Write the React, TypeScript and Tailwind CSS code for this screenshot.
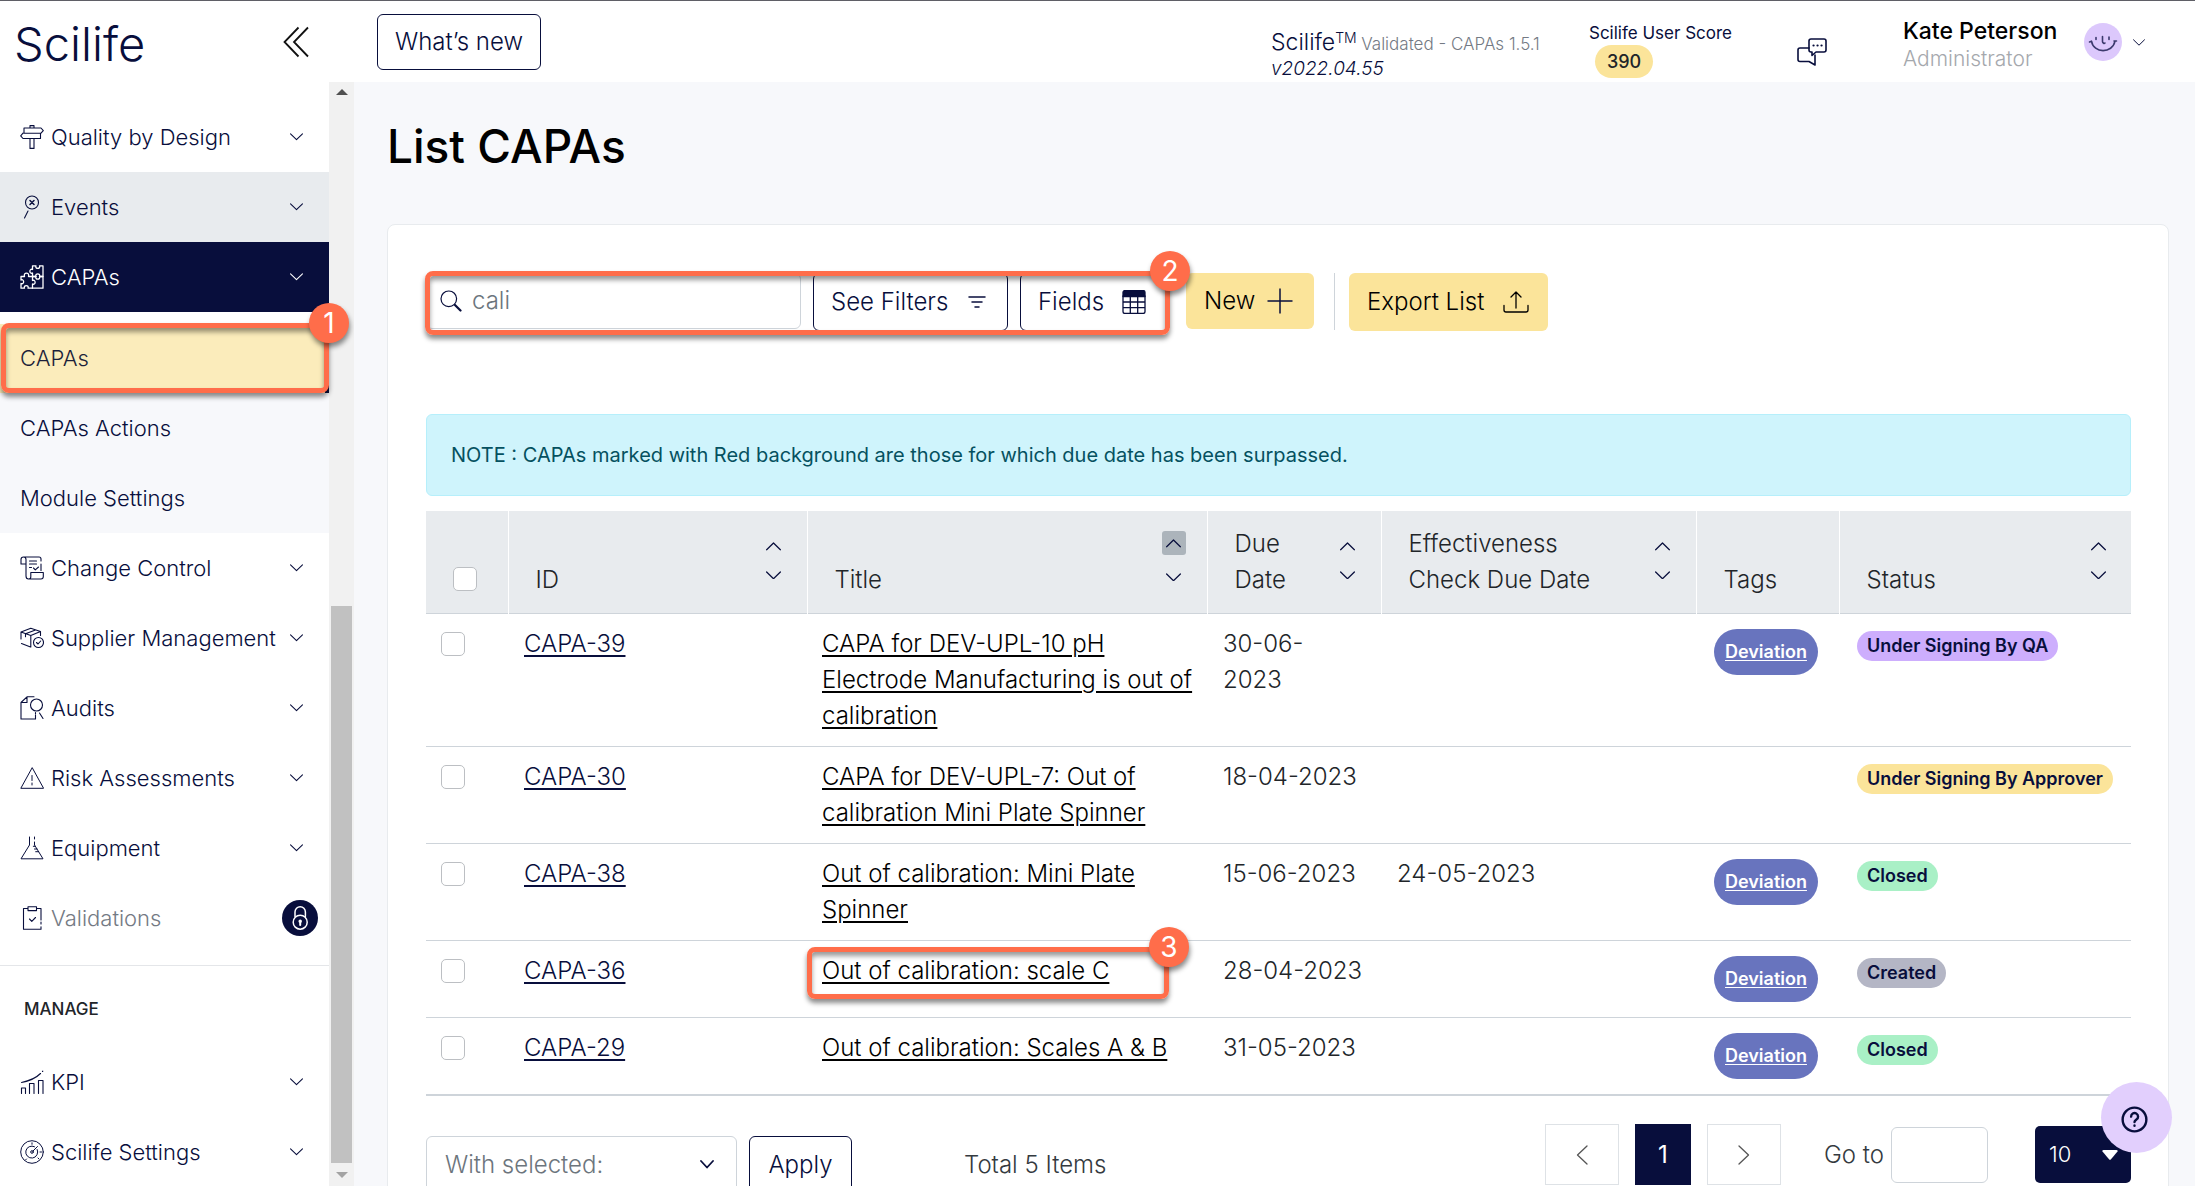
import React, { useState } from "react";
import clsx from "clsx";

type IconProps = { className?: string };

const stroke = {
  fill: "none",
  stroke: "currentColor",
  strokeLinecap: "round" as const,
  strokeLinejoin: "round" as const,
};

const Chevron = ({ className }: IconProps) => (
  <svg viewBox="0 0 12 7" className={className} {...stroke} strokeWidth="1">
    <path d="M.5.8 6 6.2 11.5.8" />
  </svg>
);

const SignpostIcon = () => (
  <svg viewBox="0 0 24 24" className="size-6" {...stroke} strokeWidth="1.1">
    <path d="M10 3V.6h4V3M4 3h17l2.3 2.6L21 8.2H4zM20.500 8.200V13.500H3L.7 10.900 3 8.200M10 13.500v9.900h4v-9.900M14 18v2" />
  </svg>
);

const EventsIcon = () => (
  <svg viewBox="0 0 24 24" className="size-6" {...stroke} strokeWidth="1.1">
    <circle cx="12" cy="7.500" r="6.500" />
    <path d="m10 5.500 4 4M14 5.500l-4 4" strokeWidth="1.5" />
    <path d="m8 16-3.500 7" />
  </svg>
);

const PuzzleIcon = () => (
  <svg viewBox="0 0 24 24" className="size-6" {...stroke} strokeWidth="1.300">
    <path d="M12.500.8H16c-1.500 3.500 5 3.500 3.500 0H23v10.700h-3.500c1.500-3.500-5-3.500-3.500 0h-3.500V8c-3.500 1.500-3.500-5 0-3.500z" />
    <path d="M12.500 11.500H16c-1.500 3.500 5 3.500 3.500 0H23v11.700H12.500V19c3.500 1.500 3.500-5 0-3.500z" />
    <path d="M1 11.500h3.500c-1.500-4.500 5.500-4.500 4 0h4M1 11.500V15c3.500-1.500 3.500 5 0 3.500v4.700h3.500c-1.500-3.500 5-3.500 3.500 0h4.500" />
  </svg>
);

const ScrollIcon = () => (
  <svg viewBox="0 0 24 24" className="size-6" {...stroke} strokeWidth="1.100">
    <path d="M6 8H1V3.500C1 2 1.800 1 3.500 1H19c1.500 0 2 .8 2 2v2M3.500 1C5 1 6 2 6 3.500V20c0 2 .8 3 2.500 3H21c1.500 0 2.300-1 2.300-2.500V16.500H10.800V21c0 1.300-.8 2-2 2M21 8v6.500M9.500 5h7M9.500 8h7M9.500 11.500h2M13.500 12l1.800 1.800L18.500 11" />
  </svg>
);

const BoxIcon = () => (
  <svg viewBox="0 0 24 24" className="size-6" {...stroke} strokeWidth="1.100">
    <path d="M10.500 21 1.500 17.500M1 13V6l9.800-3.800L20.500 5.500v4M1 6l9.800 3.500L20.500 5.500M10.800 9.500V21M5.500 7.700l10-3.700M5.500 7.700v3" />
    <circle cx="18.500" cy="16.500" r="5" />
    <path d="m16.500 16.500 1.500 1.500 2.700-3" />
  </svg>
);

const AuditIcon = () => (
  <svg viewBox="0 0 24 24" className="size-6" {...stroke} strokeWidth="1.100">
    <path d="M14 .8H7L1 6.500V23h14.500v-4M7 .8v5.700H1" />
    <circle cx="16.500" cy="9" r="6" />
    <path d="M15.500 16.500v1.500M19.500 17l3.500 5.500" />
  </svg>
);

const WarningIcon = () => (
  <svg viewBox="0 0 24 24" className="size-6" {...stroke} strokeWidth="1">
    <path d="M12 2 .8 22.300h22.400zM12 9.500v5M12 17v2" />
  </svg>
);

const FlaskIcon = () => (
  <svg viewBox="0 0 24 24" className="size-6" {...stroke} strokeWidth="1">
    <path d="M9.500 1v8L1 22.800h22L14.500 9V6M14.500 1v2M15.300 10.300h-2M17 13h-2.500M18.700 15.700h-3" />
  </svg>
);

const ClipboardIcon = () => (
  <svg viewBox="0 0 24 24" className="size-6" {...stroke} strokeWidth="1.100">
    <path d="M8 2.500H3.500v20.700H21v-2.500M21 18v-2M21 14V2.500h-4.500M8 .8h8.500v3.800H8zM9.500 13l2.300 2.300L15.500 11.500" />
  </svg>
);

const KpiIcon = () => (
  <svg viewBox="0 0 24 24" className="size-6" {...stroke} strokeWidth="1.100">
    <path d="M1.500 23.500v-5.500h4v5.500M9.500 23.500V13.500h4.500v10M18.500 23.500v-13H23v13M1.500 12.500C9 11 16 8 20.500 3.500M22.500 1.500l.3-.3" />
  </svg>
);

const DialIcon = () => (
  <svg viewBox="0 0 24 24" className="size-6" {...stroke} strokeWidth="1">
    <circle cx="12" cy="12" r="11.300" />
    <path d="M17.200 9.500A6 6 0 1 1 14.500 6.700" />
    <circle cx="12" cy="12" r="1.300" />
    <path d="m13 11 4.500-4.500M12 2.800v1.500M20 12h1.500M6.500 19l-.8.8M18 18l.8.8" />
  </svg>
);

const LockIcon = () => (
  <svg viewBox="0 0 36 36" className="size-9" {...stroke} strokeWidth="1.500">
    <circle cx="18" cy="18" r="18" fill="#080e3c" stroke="none" />
    <g stroke="#fff">
      <path d="M13 16.500V12a5.200 5.200 0 0 1 10.400 0v4.500" />
      <circle cx="18.200" cy="22.200" r="7" />
      <path d="M18.200 22.500v2.500" strokeWidth="2" />
      <circle cx="18.200" cy="21.200" r="1" fill="#fff" />
    </g>
  </svg>
);

const ChatIcon = () => (
  <svg viewBox="0 0 30 28" className="h-7 w-[30px]" {...stroke} strokeWidth="1.600">
    <path d="M14 1h13a2 2 0 0 1 2 2v9a2 2 0 0 1-2 2h-8l-4 3.500V14h-1a2 2 0 0 1-2-2V3a2 2 0 0 1 2-2z" />
    <path d="M12 10H3a2 2 0 0 0-2 2v9.500a2 2 0 0 0 2 2h9l6 3.500V17" />
    <path d="M16.500 7.500h.1M20.500 7.500h.1M24.500 7.500h.1" strokeWidth="2.200" />
  </svg>
);

const AvatarIcon = () => (
  <svg viewBox="0 0 38 38" className="size-[38px]" {...stroke} strokeWidth="1.600">
    <circle cx="19" cy="19" r="19" fill="#dcc8fc" stroke="none" />
    <g stroke="#3c3a6e">
      <path d="M5.500 19l2-.8M7.500 18.200c2 12.500 21 12.500 23.500 0M30 18h2.500M12 14.500v2M25 14v2.500M18.500 13.500v5c0 1 1.500 2.500 2.500 1.500" />
    </g>
  </svg>
);

const TableIcon = () => (
  <svg viewBox="0 0 24 24" className="size-6" {...stroke} strokeWidth="1.300">
    <path d="M1 6.500V2.500A2 2 0 0 1 3 .5h18a2 2 0 0 1 2 2v4z" fill="currentColor" />
    <path d="M1 6v15.500a2 2 0 0 0 2 2h18a2 2 0 0 0 2-2V6M1 12h22M1 17.700h22M8.300 6v17M15.700 6v17" />
  </svg>
);

type NavItem = {
  label: string;
  icon: React.ComponentType;
  tone?: "hover" | "active";
  locked?: boolean;
};

const topItems: NavItem[] = [
  { label: "Quality by Design", icon: SignpostIcon },
  { label: "Events", icon: EventsIcon, tone: "hover" },
  { label: "CAPAs", icon: PuzzleIcon, tone: "active" },
];

const moduleItems: NavItem[] = [
  { label: "Change Control", icon: ScrollIcon },
  { label: "Supplier Management", icon: BoxIcon },
  { label: "Audits", icon: AuditIcon },
  { label: "Risk Assessments", icon: WarningIcon },
  { label: "Equipment", icon: FlaskIcon },
  { label: "Validations", icon: ClipboardIcon, locked: true },
];

const manageItems: NavItem[] = [
  { label: "KPI", icon: KpiIcon },
  { label: "Scilife Settings", icon: DialIcon },
];

const NavRow = ({ item }: { item: NavItem }) => {
  const Icon = item.icon;
  return (
    <button
      type="button"
      className={clsx(
        "flex h-[70px] w-full shrink-0 items-center pl-5 text-left text-[22px]",
        item.locked ? "pr-[11px]" : "pr-[26px]",
        item.tone === "hover" && "bg-[#e8ebee]",
        item.tone === "active" ? "bg-[#080e3c] text-white" : "text-[#080e3c]"
      )}
    >
      <Icon />
      <span
        className={clsx(
          "ml-[7px] flex-1 whitespace-nowrap",
          item.locked && "text-[#747a84]"
        )}
      >
        {item.label}
      </span>
      {item.locked ? <LockIcon /> : <Chevron className="w-[13px] shrink-0" />}
    </button>
  );
};

const Callout = ({ step, className }: { step: number; className: string }) => (
  <div
    className={clsx(
      "pointer-events-none absolute z-10 rounded-lg border-5 border-[#ff6d4a] shadow-[0_4px_5px_rgba(0,0,0,0.45),inset_0_4px_5px_rgba(0,0,0,0.4)]",
      className
    )}
  >
    <span className="absolute -top-[25px] -right-[25px] flex size-10 items-center justify-center rounded-full bg-[#ff6d4a] text-[28px] font-normal text-white shadow-[1px_4px_5px_rgba(0,0,0,0.45)]">
      {step}
    </span>
  </div>
);

const Sidebar = () => (
  <aside className="flex w-[354px] shrink-0 overflow-hidden">
    <nav className="relative flex flex-1 flex-col bg-white pt-5">
      {topItems.map((item) => (
        <NavRow key={item.label} item={item} />
      ))}
      <div className="bg-[#f7f8fb]">
        <div className="h-3 bg-white" />
        <div className="relative">
          <a
            href="#capas"
            className="flex h-[69px] items-center border-r-4 border-[#080e3c] bg-[#fbecbb] pl-5 text-[22px] text-[#1c1f3a]"
          >
            CAPAs
          </a>
          <Callout step={1} className="-top-px right-0 bottom-0 left-px" />
        </div>
        <a href="#actions" className="flex h-[70px] items-center pl-5 text-[22px]">
          CAPAs Actions
        </a>
        <a href="#settings" className="flex h-[70px] items-center pl-5 text-[22px]">
          Module Settings
        </a>
      </div>
      {moduleItems.map((item) => (
        <NavRow key={item.label} item={item} />
      ))}
      <div className="mt-3 border-t border-[#e4e6e9] pt-[29px] pb-6">
        <h2 className="pl-6 text-[17px] leading-7 font-medium text-[#212529]">MANAGE</h2>
      </div>
      {manageItems.map((item) => (
        <NavRow key={item.label} item={item} />
      ))}
    </nav>

    {/* scroll track */}
    <div className="flex w-[25px] flex-col items-center justify-between bg-[#f1f1f1]">
      <svg viewBox="0 0 12 6" className="mt-[7px] w-3" fill="#505050">
        <path d="M0 6 6 0l6 6z" />
      </svg>
      <div className="mt-[511px] w-[21px] flex-1 bg-[#c1c1c1]" />
      <svg viewBox="0 0 12 6" className="mt-[9px] mb-2 w-3" fill="#a3a3a3">
        <path d="M0 0l6 6 6-6z" />
      </svg>
    </div>
  </aside>
);

const TopBar = () => (
  <header className="flex h-[82px] shrink-0 items-center border-t border-[#5f5f66] bg-white">
    <div className="flex w-[354px] items-center justify-between pr-[45px] pl-[14px]">
      <span className="pt-1 text-[47px] leading-[56px] text-[#080e3c]">Scilife</span>
      <button type="button" aria-label="Collapse menu">
        <svg viewBox="0 0 26 32" className="h-8 w-[26px]" fill="none" stroke="#111" strokeWidth="1.800">
          <path d="M15.500 1.500 1.500 16l14 14.500M25 1.500 11 16l14 14.500" />
        </svg>
      </button>
    </div>
    <button
      type="button"
      className="ml-[23px] h-14 rounded-md border border-[#080e3c] px-[17px] text-[24px]"
    >
      What’s new
    </button>

    <div className="ml-auto flex h-full items-start pr-[50px]">
      <div className="w-[318px] pt-[26px]">
        <div className="leading-[30px] whitespace-nowrap">
          <span className="text-[23px]">
            Scilife<sup className="text-sm">TM</sup>
          </span>{" "}
          <span className="text-[17px] text-[#747a84]">Validated - CAPAs 1.5.1</span>
        </div>
        <div className="text-[19px] leading-5 italic">v2022.04.55</div>
      </div>
      <div className="w-[208px] pt-5">
        <div className="text-[17px] leading-6 font-normal">Scilife User Score</div>
        <span className="ml-[6px] inline-flex h-[33px] items-center rounded-full bg-[#fbe49a] px-3 text-lg font-medium text-[#212529]">
          390
        </span>
      </div>
      <button type="button" aria-label="Messages" className="mt-[37px] mr-[76px]">
        <ChatIcon />
      </button>
      <div className="w-[181px] pt-4">
        <div className="text-[23px] leading-7 font-medium whitespace-nowrap text-black">Kate Peterson</div>
        <div className="text-[21px] leading-7 text-[#a5a8ad]">Administrator</div>
      </div>
      <button type="button" aria-label="Account menu" className="mt-[22px] flex items-center gap-[11px]">
        <AvatarIcon />
        <Chevron className="w-3" />
      </button>
    </div>
  </header>
);

type Row = {
  id: string;
  title: string;
  due: string;
  check?: string;
  tag?: string;
  status: string;
  statusClass: string;
};

const rows: Row[] = [
  {
    id: "CAPA-39",
    title: "CAPA for DEV-UPL-10 pH Electrode Manufacturing is out of calibration",
    due: "30-06-\n2023",
    tag: "Deviation",
    status: "Under Signing By QA",
    statusClass: "bg-[#cdaefd]",
  },
  {
    id: "CAPA-30",
    title: "CAPA for DEV-UPL-7: Out of calibration Mini Plate Spinner",
    due: "18-04-2023",
    status: "Under Signing By Approver",
    statusClass: "bg-[#fbe49a]",
  },
  {
    id: "CAPA-38",
    title: "Out of calibration: Mini Plate Spinner",
    due: "15-06-2023",
    check: "24-05-2023",
    tag: "Deviation",
    status: "Closed",
    statusClass: "bg-[#a9f0c6]",
  },
  {
    id: "CAPA-36",
    title: "Out of calibration: scale C",
    due: "28-04-2023",
    tag: "Deviation",
    status: "Created",
    statusClass: "bg-[#b4b6c5]",
  },
  {
    id: "CAPA-29",
    title: "Out of calibration: Scales A & B",
    due: "31-05-2023",
    tag: "Deviation",
    status: "Closed",
    statusClass: "bg-[#a9f0c6]",
  },
];

const Checkbox = ({ label }: { label: string }) => (
  <input
    type="checkbox"
    aria-label={label}
    className="block size-6 appearance-none rounded-[5px] border border-[#bcbfc3] bg-white"
  />
);

type Column = { label: string; sortable?: boolean; sorted?: boolean };

const columns: Column[] = [
  { label: "ID", sortable: true },
  { label: "Title", sortable: true, sorted: true },
  { label: "Due Date", sortable: true },
  { label: "Effectiveness Check Due Date", sortable: true },
  { label: "Tags" },
  { label: "Status", sortable: true },
];

const HeaderCell = ({ column }: { column: Column }) => (
  <th className="border-r border-white py-[15px] pr-[21px] pl-[27px] text-left align-bottom font-light last:border-r-0">
    <div className="flex items-end justify-between">
      <span className={clsx(column.sortable && "pr-6")}>{column.label}</span>
      {column.sortable && (
        <span
          className={clsx(
            "flex shrink-0 flex-col items-center text-[#080e3c]",
            column.sorted ? "mb-[13px] gap-[14px]" : "mb-[15px] gap-[13px]"
          )}
        >
          <button
            type="button"
            aria-label={`Sort ${column.label} ascending`}
            className={clsx(
              "flex items-center justify-center",
              column.sorted ? "size-6 rounded-[3px] bg-[#acb4bb]" : "h-4 w-6"
            )}
          >
            <Chevron className="w-[15px] rotate-180" />
          </button>
          <button
            type="button"
            aria-label={`Sort ${column.label} descending`}
            className="flex h-4 w-6 items-center justify-center"
          >
            <Chevron className="w-[15px]" />
          </button>
        </span>
      )}
    </div>
  </th>
);

const CapaTable = () => (
  <table className="mt-[15px] w-full table-fixed border-b-2 border-[#ced4da] text-[24px] leading-9 text-[#212529]">
    <colgroup>
      <col className="w-[82px]" />
      <col className="w-[299px]" />
      <col />
      <col className="w-[174px]" />
      <col className="w-[315px]" />
      <col className="w-[143px]" />
      <col className="w-[292px]" />
    </colgroup>
    <thead className="bg-[#e8ebee]">
      <tr className="border-b border-[#ced4da]">
        <th className="border-r border-white pb-[22px] pl-[27px] align-bottom">
          <Checkbox label="Select all" />
        </th>
        {columns.map((column) => (
          <HeaderCell key={column.label} column={column} />
        ))}
      </tr>
    </thead>
    <tbody>
      {rows.map((row) => (
        <tr key={row.id} className="border-b border-[#ced4da] align-top last:border-b-0">
          <td className="pt-[18px] pl-[15px]">
            <Checkbox label={`Select ${row.id}`} />
          </td>
          <td className="py-3 pl-4">
            <a href={`#${row.id}`} className="text-[#080e3c] underline decoration-2 underline-offset-3">
              {row.id}
            </a>
          </td>
          <td className="relative py-3 pr-3 pl-[15px]">
            <a href={`#${row.id}`} className="text-black underline decoration-2 underline-offset-3">
              {row.title}
            </a>
            {row.id === "CAPA-36" && (
              <Callout step={3} className="top-[6px] right-[38px] left-0 h-[52px]" />
            )}
          </td>
          <td className="py-3 pl-4 whitespace-pre-line">{row.due}</td>
          <td className="py-3 pl-4">{row.check}</td>
          <td className="py-[15px] pl-[18px]">
            {row.tag && (
              <a
                href="#tag"
                className="inline-flex h-[46px] items-center rounded-full bg-[#6874be] px-[11px] align-top text-lg font-semibold text-white underline underline-offset-2"
              >
                {row.tag}
              </a>
            )}
          </td>
          <td className="pt-[17px] pl-[18px]">
            <span
              className={clsx(
                "flex h-[30px] w-fit items-center rounded-full px-[10px] text-lg font-semibold whitespace-nowrap text-[#080e3c]",
                row.statusClass
              )}
            >
              {row.status}
            </span>
          </td>
        </tr>
      ))}
    </tbody>
  </table>
);

const Toolbar = () => {
  const [query, setQuery] = useState("cali");
  return (
    <div className="flex items-start">
      <div className="relative flex gap-3">
        <label className="flex h-14 w-[375px] items-center rounded-md border border-[#ced4da] pl-[13px]">
          <svg viewBox="0 0 22 22" className="mr-[10px] size-[22px] shrink-0" {...stroke} strokeWidth="1.200">
            <circle cx="8.800" cy="8.800" r="7.800" />
            <path d="m15 15 5.500 5.500" strokeWidth="2.200" />
          </svg>
          <input
            type="text"
            aria-label="Search"
            value={query}
            onChange={(e) => setQuery(e.target.value)}
            className="w-full bg-transparent font-light text-[#6c757d] outline-none"
          />
        </label>
        <button
          type="button"
          className="flex h-[58px] w-[195px] items-center justify-between rounded-md border border-[#080e3c] pr-[21px] pl-[17px]"
        >
          See Filters
          <svg viewBox="0 0 18 12" className="w-[18px]" {...stroke} strokeWidth="1.500">
            <path d="M1 1h16M4 6h10M7 11h4" />
          </svg>
        </button>
        <button
          type="button"
          className="flex h-[58px] w-[150px] items-center justify-between rounded-md border border-[#080e3c] pr-[23px] pl-[17px]"
        >
          Fields
          <TableIcon />
        </button>
        <Callout step={2} className="-top-[2px] right-0 -left-px h-16" />
      </div>
      <button
        type="button"
        className="ml-4 flex h-14 w-32 items-center justify-between rounded-md bg-[#fbe49a] pr-[21px] pl-[18px] text-black"
      >
        New
        <svg viewBox="0 0 26 26" className="size-[26px]" stroke="#080e3c" strokeWidth="1.500">
          <path d="M13 .5v25M.5 13h25" />
        </svg>
      </button>
      <div className="mx-[14px] ml-5 h-[57px] border-l border-[#ced4da]" />
      <button
        type="button"
        className="flex h-[58px] w-[199px] items-center justify-between rounded-md bg-[#fbe49a] pr-[19px] pl-[18px] text-black"
      >
        Export List
        <svg viewBox="0 0 26 22" className="h-[22px] w-[26px]" {...stroke} strokeWidth="1.300">
          <path d="M1 14.500v4.500a2 2 0 0 0 2 2h20a2 2 0 0 0 2-2v-4.500M13 17V1M8 6l5-5 5 5" />
        </svg>
      </button>
    </div>
  );
};

const TableFooter = () => (
  <div className="mt-[28px] flex items-start">
    <div className="mt-3 flex items-center">
      <div className="relative">
        <select
          aria-label="With selected"
          className="h-[58px] w-[311px] appearance-none rounded-md border border-[#ced4da] bg-white pl-[18px] font-light text-[#6c757d]"
        >
          <option>With selected:</option>
        </select>
        <svg viewBox="0 0 14 9" className="pointer-events-none absolute top-6 right-[23px] w-[14px]" {...stroke} strokeWidth="1.800">
          <path d="m1 1 6 6.500L13 1" />
        </svg>
      </div>
      <button
        type="button"
        className="ml-3 h-[58px] w-[103px] rounded-md border border-[#080e3c]"
      >
        Apply
      </button>
      <span className="ml-[112px] text-[#343a40]">Total 5 Items</span>
    </div>

    <div className="ml-auto flex items-center">
      <button
        type="button"
        aria-label="Previous page"
        className="flex h-[61px] w-[74px] items-center justify-center border border-[#dee2e6]"
      >
        <svg viewBox="0 0 12 20" className="w-3" {...stroke} stroke="#555" strokeWidth="1.300">
          <path d="M11 1 1.500 10 11 19" />
        </svg>
      </button>
      <button type="button" className="mx-4 h-[61px] w-14 bg-[#080e3c] font-normal text-white">
        1
      </button>
      <button
        type="button"
        aria-label="Next page"
        className="flex h-[61px] w-[74px] items-center justify-center border border-[#dee2e6]"
      >
        <svg viewBox="0 0 12 20" className="w-3" {...stroke} stroke="#555" strokeWidth="1.300">
          <path d="m1 1 9.500 9L1 19" />
        </svg>
      </button>
      <label className="ml-[43px] flex items-center gap-[7px] text-[#343a40]">
        Go to
        <input type="text" className="h-14 w-[97px] rounded-md border border-[#ced4da] bg-white" />
      </label>
      <div className="relative ml-[47px]">
        <select
          aria-label="Items per page"
          className="h-[57px] w-24 appearance-none rounded-[5px] bg-[#080e3c] pl-[14px] text-[22px] font-light text-white"
        >
          <option>10</option>
        </select>
        <svg viewBox="0 0 16 10" className="pointer-events-none absolute top-6 right-[13px] w-4" fill="#fff">
          <path d="M1.500 0h13c1 0 1.500.8 1 1.500L9 9.300c-.6.7-1.400.7-2 0L.5 1.500C0 .8.500 0 1.500 0z" />
        </svg>
      </div>
    </div>
  </div>
);

const App = () => (
  <div className="relative flex h-screen flex-col overflow-hidden bg-[#f7f8fb] font-['Inter',sans-serif] font-light text-[#080e3c]">
    <TopBar />
    <div className="flex min-h-0 flex-1">
      <Sidebar />
      <main className="min-w-0 flex-1 overflow-hidden pr-[26px] pl-[33px]">
        <h1 className="mt-9 text-[46px] leading-[56px] font-medium text-black">List CAPAs</h1>
        <section className="mt-[50px] rounded-lg border border-[#e8ebee] bg-white pt-[48px] pr-[37px] pb-12 pl-[38px] text-[24px]">
          <Toolbar />
          <p className="mt-[83px] rounded-md border border-[#b6effb] bg-[#cff4fc] px-6 py-[22px] text-[20px] leading-9 font-normal text-[#055160]">
            NOTE : CAPAs marked with Red background are those for which due date has been surpassed.
          </p>
          <CapaTable />
          <TableFooter />
        </section>
      </main>
    </div>

    <button
      type="button"
      aria-label="Help"
      className="absolute right-[23px] bottom-[33px] z-20 flex size-[71px] items-center justify-center rounded-full bg-[#e2cffd] pt-1 pr-1"
    >
      <svg viewBox="0 0 28 28" className="size-[27px]" {...stroke} strokeWidth="2.500">
        <circle cx="14" cy="14" r="12.300" />
        <path d="M10.500 11a3.600 3.600 0 1 1 5.500 3c-1.300.9-2 1.400-2 2.700M14 20.300v.2" />
      </svg>
    </button>
  </div>
);

export default App;
